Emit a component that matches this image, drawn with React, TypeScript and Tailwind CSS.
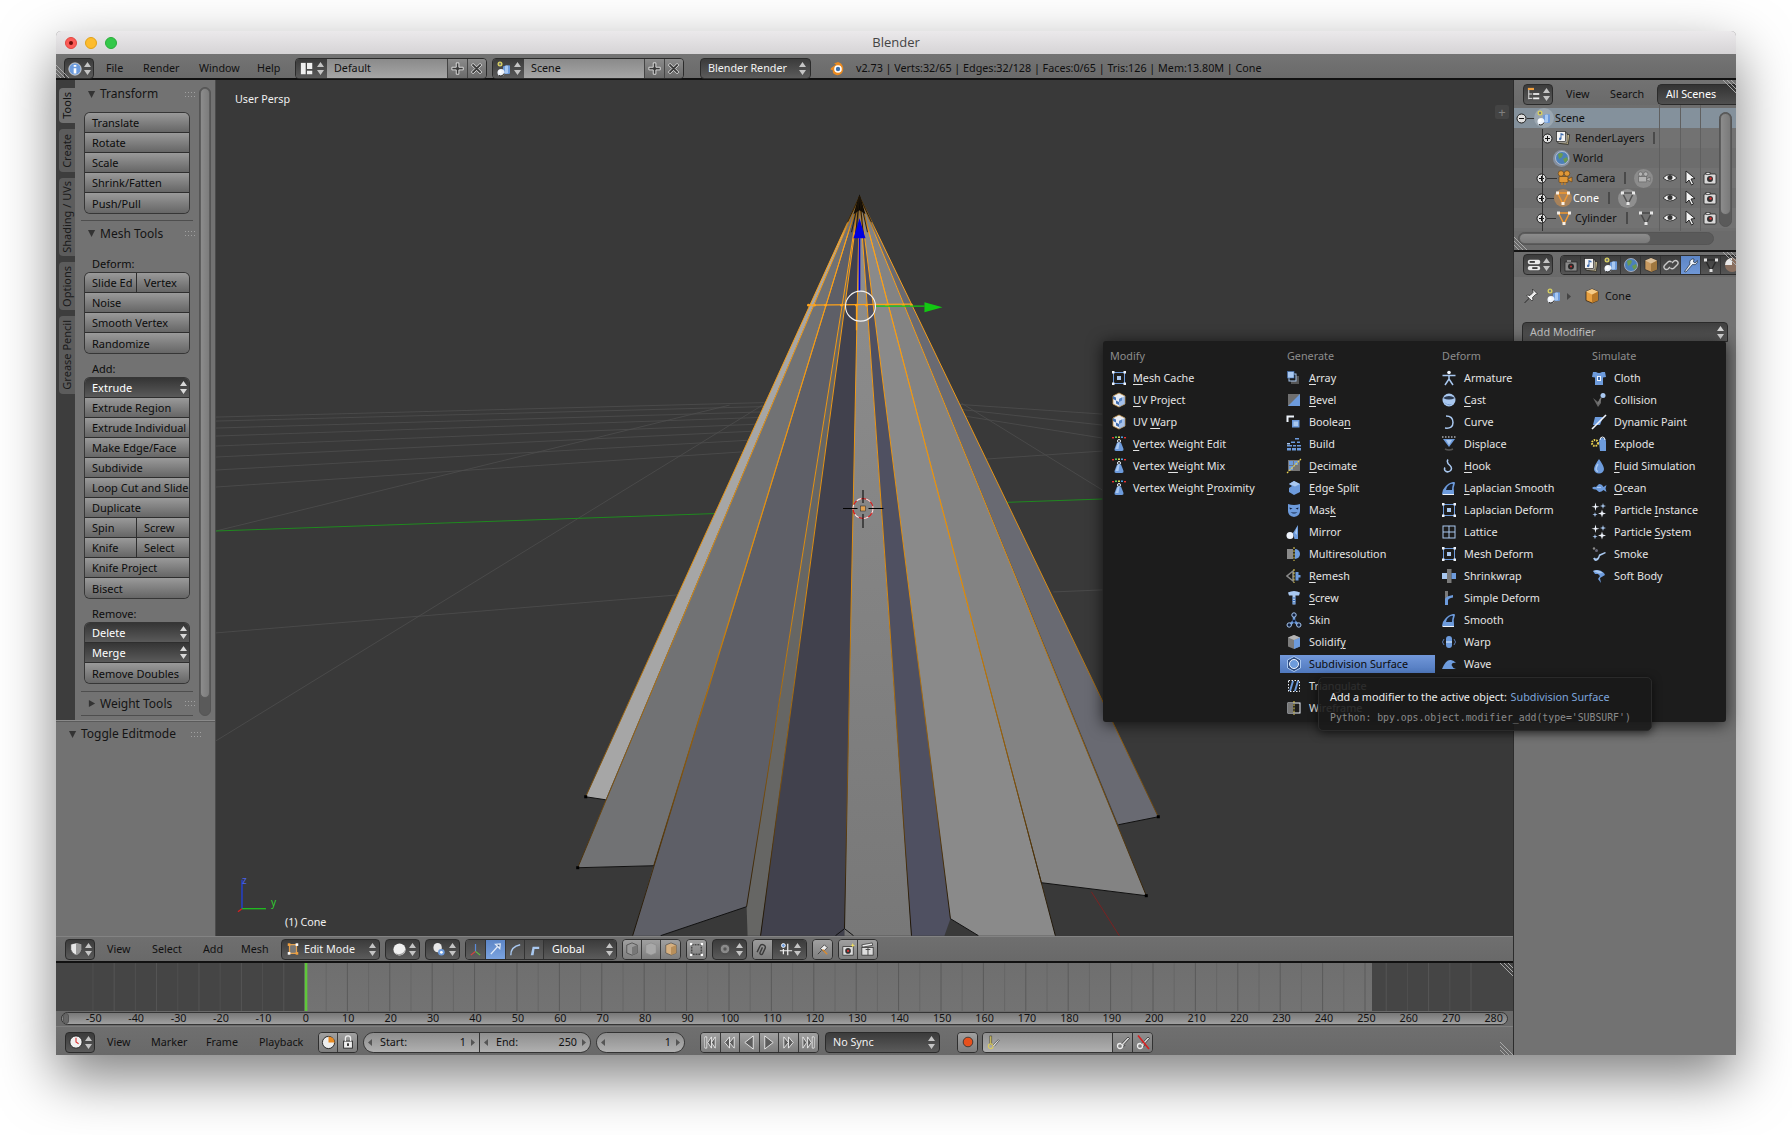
import React from 'react';

const FONT = "[font-family:'Noto_Sans','Open_Sans',sans-serif]";

// small icon wrapper, everything is drawn on a 16x16 grid
const S: React.FC<{ children: React.ReactNode; size?: number; className?: string }> = ({ children, size = 16, className }) => (
  <svg width={size} height={size} viewBox="0 0 16 16" className={`shrink-0 ${className ?? ''}`}>{children}</svg>
);

const L = '#a9c8f0';
const M = '#6d9bdc';
const D = '#3f6cae';
const W = '#eef3fb';
const G = '#8a8a8a';
const Y = '#e8d050';

const corners = (c: string) => (
  <>
    <rect x="1" y="1" width="2.5" height="2.5" fill={c} />
    <rect x="12.5" y="1" width="2.5" height="2.5" fill={c} />
    <rect x="1" y="12.5" width="2.5" height="2.5" fill={c} />
    <rect x="12.5" y="12.5" width="2.5" height="2.5" fill={c} />
  </>
);
const meshIcon = (
  <>
    <rect x="2.5" y="2.5" width="11" height="11" fill="none" stroke={M} />
    <rect x="6" y="6" width="4" height="4" fill={L} />
    {corners(W)}
  </>
);
const uvIcon = (
  <>
    <path d="M8 1 14 4v8l-6 3-6-3V4z" fill="#e9edf5" stroke="#c99a50" strokeWidth=".8" />
    <path d="M2 4l3 1.5v3L2 7zM5 8.5l3 1.5v3L5 11.5zM8 7l3-1.5v3L8 10z" fill={D} />
    <path d="M8 7l6-3v8l-6 3z" fill={M} opacity=".55" />
  </>
);
const weightIcon = (
  <>
    <rect x="1" y="1" width="2" height="1.4" fill="#e33" />
    <rect x="4" y="0.5" width="2" height="1.4" fill="#6d6" />
    <rect x="7" y="0.5" width="2" height="1.4" fill="#ee5" />
    <rect x="10" y="0.5" width="2" height="1.4" fill="#5ae" />
    <rect x="13" y="1" width="2" height="1.4" fill="#e33" />
    <circle cx="8" cy="5" r="1.5" fill="none" stroke={W} />
    <path d="M6 6.500h4l2.500 6.500q.3 2-1.500 2H5q-1.800 0-1.500-2z" fill={M} />
    <path d="M6.500 7h2l-1 6H4.500z" fill={L} />
  </>
);
const smoothIcon = (
  <>
    <path d="M1 14q0-4 3-7 3-4 8-5 2-.5 2 1-2 5-1 9v2z" fill={M} />
    <path d="M5 10q0-3 3-5 3-2 4-1-1 3-1 6z" fill="#162030" />
    <path d="M2 14h11v1H1z" fill={W} />
  </>
);
const particles = (
  <>
    <path d="M4.500 0.500 5.300 4l3.200.8-3.200.8-.8 3.400-.8-3.400L.500 4.800 3.700 4z" fill={W} />
    <path d="M12 1l.7 2.300 2.300.7-2.300.7-.7 2.300-.7-2.300L9 4l2.300-.7z" fill={L} />
    <path d="M11 7.500l.9 3.100 3.100.9-3.100.9-.9 3.100-.9-3.100L7 11.500l3.100-.9z" fill={W} />
    <path d="M4 10l.6 2 2 .6-2 .6-.6 2-.6-2-2-.6 2-.6z" fill={L} />
  </>
);

const MOD: Record<string, React.ReactNode> = {
  'Mesh Cache': meshIcon,
  'UV Project': uvIcon,
  'UV Warp': uvIcon,
  'Vertex Weight Edit': weightIcon,
  'Vertex Weight Mix': weightIcon,
  'Vertex Weight Proximity': weightIcon,
  Array: <><rect x="5" y="6" width="8" height="8" fill="#555" /><rect x="3" y="4" width="7" height="7" fill="#1c1c1c" stroke={L} /><rect x="1.500" y="1.500" width="6.500" height="6.500" fill={L} stroke={D} strokeWidth=".6" /></>,
  Bevel: <><rect x="2" y="2" width="12" height="12" fill="#6f6f6f" /><path d="M14 2v12H2z" fill={M} /></>,
  Boolean: <><path d="M1.500 8V2.500H8" fill="none" stroke={W} strokeWidth="2" /><rect x="6" y="6" width="7.500" height="7.500" fill={M} /><rect x="7.500" y="7.500" width="4.500" height="4.500" fill={L} /></>,
  Build: <><path d="M9 2h4v1.500H9zM5 5.500h4V7H5zM11 5.500h3V7h-3zM1 9h5v1.500H1zM7 9h3v1.500H7zM11 9h4v1.500h-4zM1 12h4v2.500H1zM6 12h4v2.500H6zM11 12h4v2.500h-4z" fill={M} /><path d="M1 7h3v1.500H1z" fill={L} /></>,
  Decimate: <><rect x="2" y="2" width="12" height="11" fill="#777" /><path d="M3 3h4v4H3zM8 3h4v4H8zM3 8h4v4H3z" fill={M} /><path d="M1 15 15 1" stroke={Y} strokeWidth="1.200" strokeDasharray="2 1" /></>,
  'Edge Split': <><path d="M8 1l6 3v8l-6 3-5-3V8l3-2-3-2z" fill={M} /><path d="M8 1l6 3-5 2.500L3 4z" fill={L} /></>,
  Mask: <><path d="M2 2q6 2 12 0v7q0 5-6 6-6-1-6-6z" fill={M} /><path d="M3.500 5.500l3 1-2.500 1zM12.500 5.500l-3 1 2.500 1z" fill="#102040" /><path d="M4.500 10q3.500 3 7 0-3.500 1-7 0z" fill="#102040" /></>,
  Mirror: <><circle cx="4" cy="11.500" r="3.500" fill={W} /><path d="M7 9 12 1v14H8.500z" fill={M} /><path d="M9 9l2-6v8z" fill={L} /></>,
  Multiresolution: <><rect x="1" y="3" width="6" height="10" fill={G} /><path d="M9 3a5 5 0 0 1 0 10z" fill={M} /><path d="M8 1v14" stroke={Y} strokeDasharray="2 1.200" /></>,
  Remesh: <><path d="M7 3 1 8l6 5z" fill="none" stroke={G} strokeWidth="1.500" /><path d="M9.500 4h3v3h2v2.500h-2v3h-3z" fill={M} /><path d="M8 1v14" stroke={Y} strokeDasharray="2 1.200" /></>,
  Screw: <><path d="M2 2.500q6-3 12 0l-1 3H9.500v9H6.500v-9H3z" fill={L} /><path d="M6 8h4M6 10.500h4M6 13h4" stroke={D} /></>,
  Skin: <><path d="M8 3v6M8 9l-4 3.500M8 9l4 3.500" stroke={M} strokeWidth="2.500" /><circle cx="8" cy="3" r="2.200" fill="#102040" stroke={L} /><circle cx="3.200" cy="13" r="2.200" fill="#102040" stroke={L} /><circle cx="12.800" cy="13" r="2.200" fill="#102040" stroke={L} /><circle cx="8" cy="9" r="1.500" fill="#102040" /></>,
  Solidify: <><path d="M8 1 14 3.500v9L8 15l-6-2.500v-9z" fill="#7c7c7c" /><path d="M8 6l6-2.500v9L8 15z" fill={M} /><path d="M2 3.500 8 1l6 2.500L8 6z" fill="#b5b5b5" /></>,
  'Subdivision Surface': <><path d="M8 .5 14.500 4v8L8 15.500 1.500 12V4z" fill="#2c4a80" stroke={L} /><circle cx="8" cy="8" r="4.500" fill={M} stroke={W} /></>,
  Triangulate: <><rect x="2.500" y="2.500" width="11" height="11" fill="none" stroke={W} strokeDasharray="1.500 1.500" /><path d="M3 13 6 3h2l-3 10zM8 13l3-10h2l-3 10z" fill={M} /></>,
  Wireframe: <><rect x="2" y="3" width="12" height="10" fill="none" stroke={W} /><rect x="2" y="3" width="5" height="10" fill="#777" /><path d="M8 1v14" stroke={Y} strokeDasharray="2 1.200" /></>,
  Armature: <><circle cx="8" cy="2.500" r="1.800" fill={W} /><path d="M1.500 5.500h13M8 5v4M8 9l-4 6M8 9l4 6" stroke={L} strokeWidth="1.500" fill="none" /></>,
  Cast: <><circle cx="8" cy="8" r="6.500" fill={L} /><path d="M2 6q6-4 12 0-6 3-12 0z" fill="#2c3a50" /><path d="M3 10q4 4 9 2-5 3-9-2z" fill={D} /></>,
  Curve: <><path d="M5 2q7 0 7 6.500T4 14" fill="none" stroke={L} strokeWidth="1.500" /></>,
  Displace: <><path d="M2 3h12L8 11z" fill={M} /><path d="M5 4h6L8 9z" fill={L} /><path d="M1 1h14" stroke={W} strokeDasharray="1.500 1.500" /><path d="M4 13q4 2 8 0" stroke="#555" strokeWidth="1.500" fill="none" /></>,
  Hook: <><path d="M7 1.500q-2 3 2 6 3 3 0 5.500-3 2-5-.5-1-1.500 0-3" fill="none" stroke={L} strokeWidth="1.500" /></>,
  'Laplacian Smooth': smoothIcon,
  'Laplacian Deform': meshIcon,
  Lattice: <><rect x="2" y="2" width="12" height="12" fill="none" stroke={L} /><path d="M8 2v12M2 8h12" stroke={L} /></>,
  'Mesh Deform': meshIcon,
  Shrinkwrap: <><rect x="6" y="1" width="4.500" height="14" fill="#7a7a7a" /><rect x="1" y="5" width="5" height="6" fill={L} /><rect x="10.500" y="5" width="4.500" height="6" fill={M} /></>,
  'Simple Deform': <><rect x="4" y="1" width="3" height="8" fill="#7a7a7a" /><path d="M4 15V9q1-3 8-4v2.500q-5 1-5 3V15z" fill={M} /></>,
  Smooth: smoothIcon,
  Warp: <><rect x="5" y="2" width="6" height="12" rx="3" fill={M} /><path d="M5 7h6v2H5z" fill={L} /><path d="M3 5q-3 3 0 6M13 5q3 3 0 6" stroke="#5a7ab0" fill="none" /></>,
  Wave: <><path d="M1 13q4-10 9-9 3 .5 5 3-4-1-4.500 2 1 3 4.500 4z" fill={M} /><path d="M5 8q3-3 6-3-4 1-6 3z" fill={L} /></>,
  Cloth: <><path d="M2 2h3q3 2 6 0h3l1 5-3 .5V15H4V7.500L1 7z" fill={M} /><rect x="6" y="6" width="4" height="5" fill={W} /><rect x="7" y="7" width="2" height="3" fill={D} /></>,
  Collision: <><path d="M2 6l5 4 3-5v6l-3 4z" fill="#666" /><path d="M10 6l-3 6" stroke="#777" strokeWidth="1.500" /><circle cx="12" cy="3.500" r="2.500" fill={L} /></>,
  'Dynamic Paint': <><path d="M4 3h8L9 11H2z" fill={M} /><path d="M1 15 15 1" stroke={W} strokeWidth="1.600" /></>,
  Explode: <><path d="M8 6a3.500 4 0 0 1 7 0v9H9z" fill={M} /><path d="M9 4a2.500 3 0 0 1 5 0" fill="none" stroke={W} /><circle cx="4" cy="7" r="3" fill="none" stroke={Y} strokeDasharray="1.500 1" strokeWidth="2" /></>,
  'Fluid Simulation': <><path d="M8 1q5 7 5 10a5 4.500 0 0 1-10 0q0-3 5-10z" fill={M} /><path d="M7 6q-2 3-2 5 0 2 2 2.500" stroke={L} strokeWidth="1.500" fill="none" /></>,
  Ocean: <><path d="M1 8q2-2 4-1l3-3q3 0 4.500 3l3-2-1 3.500 1 3.500-3-2Q10 12.500 8 12L5 9.500Q3 10 1 8z" fill={M} /><path d="M6 7.500h4" stroke={L} /></>,
  'Particle Instance': particles,
  'Particle System': particles,
  Smoke: <><path d="M2 12.500 4 15q4 0 5-5l6-3-1-1-6 2.500q-1 4-3 4-1 0-1-1z" fill={L} /><circle cx="3" cy="2.500" r="1.200" fill={G} /><circle cx="5.500" cy="4.500" r="1.500" fill="#667" /></>,
  'Soft Body': <><path d="M2 3q6-3 11 2l1 2-5 3 1 5-3-4 2-3-2-2-3 0z" fill={M} /><path d="M2 3q6-2 10 2l-4 .5z" fill={L} /></>,
};

const COLS: { title: string; w: string; items: [string, number?][] }[] = [
  { title: 'Modify', w: 'w-[177px]', items: [['Mesh Cache', 0], ['UV Project', 0], ['UV Warp', 3], ['Vertex Weight Edit', 0], ['Vertex Weight Mix', 7], ['Vertex Weight Proximity', 14]] },
  { title: 'Generate', w: 'w-[155px]', items: [['Array', 0], ['Bevel', 0], ['Boolean', 6], ['Build'], ['Decimate', 0], ['Edge Split', 0], ['Mask', 3], ['Mirror'], ['Multiresolution'], ['Remesh', 0], ['Screw', 0], ['Skin'], ['Solidify', 7], ['Subdivision Surface'], ['Triangulate'], ['Wireframe']] },
  { title: 'Deform', w: 'w-[150px]', items: [['Armature'], ['Cast', 0], ['Curve'], ['Displace'], ['Hook', 0], ['Laplacian Smooth', 0], ['Laplacian Deform'], ['Lattice'], ['Mesh Deform'], ['Shrinkwrap'], ['Simple Deform'], ['Smooth'], ['Warp'], ['Wave']] },
  { title: 'Simulate', w: 'flex-1', items: [['Cloth'], ['Collision'], ['Dynamic Paint'], ['Explode'], ['Fluid Simulation', 0], ['Ocean', 0], ['Particle Instance', 9], ['Particle System', 9], ['Smoke'], ['Soft Body']] },
];

const Accel: React.FC<{ label: string; at?: number }> = ({ label, at }) =>
  at === undefined ? <span>{label}</span> : (
    <span>{label.slice(0, at)}<span className="underline underline-offset-2">{label[at]}</span>{label.slice(at + 1)}</span>
  );

// up/down arrows of the blender dropdowns
const UpDown: React.FC<{ c?: string; className?: string }> = ({ c = '#c4c4c4', className }) => (
  <svg width="7" height="13" viewBox="0 0 7 13" className={`shrink-0 ${className ?? ''}`}><path d="M3.500 0 7 5H0zM0 8h7l-3.500 5z" fill={c} /></svg>
);

// the hatched corners of each blender area
const Hatch: React.FC<{ className: string; flip?: boolean }> = ({ className, flip }) => (
  <svg width="13" height="13" viewBox="0 0 13 13" className={`absolute ${className}`}>
    <path d={flip ? 'M0 0 13 13M4 0 13 9M8 0 13 5' : 'M0 0 13 13M0 4 9 13M0 8 5 13'} stroke="#a8a8a8" strokeWidth="1" />
  </svg>
);

const SceneIcon = (
  <S>
    <circle cx="4" cy="3" r="2.500" fill="#d8d060" />
    <circle cx="4" cy="3" r="1.200" fill="#777" />
    <path d="M7 5.500q4-2 7-1v8q-3 1-7 0z" fill={M} />
    <path d="M9 5q2-1 3 0v7q-1 .800-3 .300z" fill={L} />
    <circle cx="5" cy="11.500" r="3.500" fill={W} />
    <circle cx="4" cy="10.500" r="1.500" fill="#fff" />
    <path d="M3 14.500a3.500 3.500 0 0 0 5-2" stroke="#222" fill="none" />
  </S>
);
const PlusIcon = <S size={14}><path d="M6 1h3v5h5v3H9v5H6V9H1V6h5z" fill="#3a3a3a" stroke="#e8e8e8" strokeWidth="1" /></S>;
const XIcon = <S size={14}><path d="M2 4l2-2 4 4 4-4 2 2-4 4 4 4-2 2-4-4-4 4-2-2 4-4z" fill="#3a3a3a" stroke="#e8e8e8" strokeWidth="1" transform="translate(-.5 -.5)" /></S>;
const ConeTri = (c: string, fill = 'none') => (
  <S>
    <path d="M2.500 3h11L8 14z" fill={fill} stroke={c} strokeWidth="1.500" />
    <rect x="1" y="1.500" width="3" height="3" fill="#fff" opacity=".85" />
    <rect x="12" y="1.500" width="3" height="3" fill="#fff" opacity=".85" />
    <rect x="6.500" y="12" width="3" height="3" fill="#fff" opacity=".85" />
  </S>
);
const CamOrange = (
  <S>
    <circle cx="4" cy="3.500" r="2.800" fill="#e09838" stroke="#5a3a10" strokeWidth=".6" />
    <circle cx="10" cy="3.500" r="2.800" fill="#e09838" stroke="#5a3a10" strokeWidth=".6" />
    <rect x="2" y="6.500" width="9" height="6" rx="1" fill="#e09838" stroke="#5a3a10" strokeWidth=".6" />
    <path d="M11 9l4-2v5l-4-2z" fill="#e09838" stroke="#5a3a10" strokeWidth=".6" />
    <path d="M5 12.500v2.500M8 12.500v2.500" stroke="#c08030" strokeWidth="1.500" />
  </S>
);
const RenderCam = (
  <S>
    <rect x="2" y="4" width="12" height="10" rx="1" fill="#d8d8d8" stroke="#222" strokeWidth=".8" />
    <rect x="4" y="2.500" width="4" height="2" fill="#ddd" stroke="#222" strokeWidth=".6" />
    <circle cx="8" cy="9" r="3" fill="#333" />
    <circle cx="8.500" cy="8.500" r="1.200" fill="#d33" />
  </S>
);
const Eye = (
  <S>
    <path d="M1 8q7-7 14 0-7 6-14 0z" fill="#f0f0f0" stroke="#222" strokeWidth=".8" />
    <circle cx="8" cy="7.500" r="2.500" fill="#333" />
  </S>
);
const Arrow = (
  <S><path d="M4 1v12l3-3 2.500 5 2-1-2.500-5 4-.5z" fill="#f4f4f4" stroke="#1c1c1c" strokeWidth=".9" /></S>
);
const Globe = (
  <S>
    <circle cx="8" cy="8" r="6.500" fill="#4c80b8" stroke="#dde" strokeWidth=".6" />
    <path d="M4 4q3-2 5 0l-1 3-3 2zM9 9l4-2 1 3-3 3z" fill="#6a9a50" />
  </S>
);
const Cube = (
  <S>
    <path d="M8 1 14 3.500v9L8 15l-6-2.500v-9z" fill="#e8a040" stroke="#2a1a08" strokeWidth=".7" />
    <path d="M8 6.500 14 3.500v9L8 15z" fill="#b87828" />
    <path d="M2 3.500 8 1l6 2.500-6 3z" fill="#f4cb88" />
  </S>
);
const Layers = (
  <S>
    <rect x="5" y="4" width="9" height="10" fill="#c6b98e" stroke="#222" strokeWidth=".7" transform="rotate(8 9 9)" />
    <rect x="3" y="3" width="9" height="10" fill="#e0dccc" stroke="#222" strokeWidth=".7" />
    <rect x="1.500" y="1.500" width="9" height="10" fill="#f4f4f4" stroke="#222" strokeWidth=".7" />
    <path d="M4 9q0-2 1.500-1.500V3l3 1v1.500l-2-.5v4q-1 2-2.500.5z" fill={D} />
  </S>
);
const KeyIcon = (c: string, x?: boolean) => (
  <S>
    <circle cx="5" cy="12" r="2.500" fill="none" stroke={c} strokeWidth="1.300" />
    <path d="M6.500 10 13 3l1.500 1.500L9 10.500l1 1-1.500.5" fill="#d8d8d8" stroke="#222" strokeWidth=".7" />
    {x && <path d="M3 1.500 14 15" stroke="#d52020" strokeWidth="1.600" />}
  </S>
);

// gray widget with rounded outline, holds icons in joined cells
const Cells: React.FC<{ items: React.ReactNode[]; className?: string; active?: number; cell?: string; bg?: string }> = ({ items, className, active, cell = 'w-[19px]', bg = 'from-[#a0a0a0] to-[#7e7e7e]' }) => (
  <div className={`flex h-[21px] rounded-[4px] border border-[#2f2f2f] overflow-hidden shrink-0 ${className ?? ''}`}>
    {items.map((it, i) => (
      <div key={i} className={`${cell} h-full flex items-center justify-center border-r last:border-r-0 border-[#3a3a3a] bg-gradient-to-b ${i === active ? 'from-[#5d86c6] to-[#7ba3e0]' : bg}`}>{it}</div>
    ))}
  </div>
);

const Dark: React.FC<{ className?: string; children: React.ReactNode }> = ({ className, children }) => (
  <div className={`h-[21px] flex items-center rounded-[4px] border border-[#2b2b2b] bg-gradient-to-b from-[#3b3b3b] to-[#5b5b5b] text-[#f2f2f2] shrink-0 ${className ?? ''}`}>{children}</div>
);

const MenuText: React.FC<{ w: string; children: React.ReactNode }> = ({ w, children }) => (
  <div className={`${w} shrink-0 text-[#111]`}>{children}</div>
);

type Row = (string | { label: string; dark?: boolean })[];
const Group: React.FC<{ rows: Row[] }> = ({ rows }) => (
  <div className="w-[104px] ml-[10px] rounded-[5px] shadow-[0_0_0_1px_#363636] overflow-hidden">
    {rows.map((row, i) => (
      <div key={i} className="flex h-[20px] border-b last:border-b-0 border-[#2e2e2e]">
        {row.map((c, j) => {
          const o = typeof c === 'string' ? { label: c } : c;
          return (
            <div key={j} className={`${row.length > 1 ? (j === 0 ? 'w-[52px] border-r border-[#2e2e2e]' : 'flex-1') : 'flex-1'} flex items-center justify-between pl-[7px] pr-[2px] pt-[2px] bg-gradient-to-b whitespace-nowrap overflow-hidden ${o.dark ? 'from-[#353535] to-[#5a5a5a] text-white' : 'from-[#9a9a9a] to-[#666666] text-[#0c0c0c]'}`}>
              {o.label}
              {o.dark && <UpDown c="#d8d8d8" className="-mt-[2px]" />}
            </div>
          );
        })}
      </div>
    ))}
  </div>
);

const Dots = () => (
  <svg width="11" height="5" viewBox="0 0 11 5" className="shrink-0"><path d="M0 0h11M0 4h11" stroke="#a0a0a0" strokeDasharray="1 2" transform="translate(0 .5)" /></svg>
);

const PanelHead: React.FC<{ title: string; closed?: boolean; className: string }> = ({ title, closed, className }) => (
  <div className={`flex items-center text-[12px] text-[#141414] ${className}`}>
    <svg width="8" height="9" viewBox="0 0 9 10" className="shrink-0 mr-[4px]"><path d={closed ? 'M1 1l7 4-7 4z' : 'M0 1h8L4 9z'} fill="#333" /></svg>
    <span className="flex-1 whitespace-nowrap">{title}</span>
    <Dots />
  </div>
);

const TABS: [string, string, boolean][] = [
  ['Tools', 'h-[35px]', true],
  ['Create', 'h-[43px]', false],
  ['Shading / UVs', 'h-[78px]', false],
  ['Options', 'h-[48px]', false],
  ['Grease Pencil', 'h-[78px]', false],
];

const ToolShelf = () => (
  <div className="w-[160px] shrink-0 flex flex-col border-r border-[#4c4c4c] text-[11px]">
    <div className="flex h-[640px] shrink-0 bg-[#727272]">
      <div className="w-[19px] bg-[#3d3d3d] pl-[3px] pt-[8px] flex flex-col gap-[6px]">
        {TABS.map(([t, h, on]) => (
          <div key={t} className={`${h} rounded-l-[4px] flex items-center justify-center ${on ? 'bg-[#727272] text-[#111]' : 'bg-[#5c5c5c] text-[#1a1a1a]'}`}>
            <span className="[writing-mode:vertical-rl] rotate-180 whitespace-nowrap text-[11px]">{t}</span>
          </div>
        ))}
      </div>
      <div className="w-[124px] text-[#0d0d0d] shrink-0">
        <PanelHead title="Transform" className="h-[26px] pt-[2px] mb-[7px] pl-[13px] pr-[3px]" />
        <Group rows={[['Translate'], ['Rotate'], ['Scale'], ['Shrink/Fatten'], ['Push/Pull']]} />
        <div className="h-px bg-[#4e4e4e] ml-[6px] w-[112px] mt-[7px]" />
        <PanelHead title="Mesh Tools" className="h-[25px] pl-[13px] pr-[3px]" />
        <div className="h-[18px] mt-[9px] pl-[17px] flex items-center">Deform:</div>
        <Group rows={[['Slide Ed', 'Vertex'], ['Noise'], ['Smooth Vertex'], ['Randomize']]} />
        <div className="h-[18px] mt-[7px] pl-[17px] flex items-center">Add:</div>
        <Group rows={[[{ label: 'Extrude', dark: true }], ['Extrude Region'], ['Extrude Individual'], ['Make Edge/Face'], ['Subdivide'], ['Loop Cut and Slide'], ['Duplicate'], ['Spin', 'Screw'], ['Knife', 'Select'], ['Knife Project'], ['Bisect']]} />
        <div className="h-[18px] mt-[7px] pl-[17px] flex items-center">Remove:</div>
        <Group rows={[[{ label: 'Delete', dark: true }], [{ label: 'Merge', dark: true }], ['Remove Doubles']]} />
        <div className="h-px bg-[#4e4e4e] ml-[6px] w-[112px] mt-[8px]" />
        <PanelHead title="Weight Tools" closed className="h-[23px] pl-[13px] pr-[3px]" />
        <div className="h-px bg-[#4e4e4e] ml-[6px] w-[112px]" />
      </div>
      <div className="w-[12px] mt-[7px] h-[629px] rounded-full bg-[#5a5a5a] border border-[#555] overflow-hidden">
        <div className="h-[610px] rounded-full bg-gradient-to-r from-[#8c8c8c] to-[#7c7c7c] border border-[#5e5e5e]" />
      </div>
    </div>
    <div className="flex-1 bg-[#727272] border-t border-[#8a8a8a] shadow-[inset_0_1px_0_#5a5a5a] pl-[13px] pr-[13px] pt-[1px]">
      <PanelHead title="Toggle Editmode" className="h-[24px]" />
    </div>
  </div>
);

// the cone and its grid, a drawing in viewport pixels
const EDGE_POINTS: [number, number][] = [[586, 797], [578, 868], [654, 866], [633, 936], [747, 907], [761, 936], [845, 929], [912, 936], [951, 919], [1042, 883], [1147, 896], [1159, 817], [1056, 936]];
const GRID: [number, number, number, number][] = [
  [216, 417, 860, 400], [216, 421, 860, 404], [216, 428, 860, 409], [216, 436, 860, 414], [216, 446, 860, 420], [216, 457, 860, 426], [216, 470, 860, 434], [216, 487, 860, 444],
  [216, 633, 860, 580], [216, 741, 763, 405], [216, 531, 730, 405], [940, 403, 1103, 414], [940, 407, 1103, 425], [940, 412, 1103, 438], [962, 403, 1103, 490], [958, 461, 1103, 451], [1054, 592, 1103, 590],
];
const Viewport3D = () => (
  <svg className="absolute inset-0 w-full h-full" viewBox="216 80 1298 856">
    <defs>
      <linearGradient id="edge" gradientUnits="userSpaceOnUse" x1="0" y1="200" x2="0" y2="930">
        <stop offset="0" stopColor="#6a4810" />
        <stop offset=".05" stopColor="#ffa31a" />
        <stop offset=".55" stopColor="#d88a10" />
        <stop offset=".8" stopColor="#7a5010" />
        <stop offset="1" stopColor="#1c1408" />
      </linearGradient>
      <linearGradient id="centre" gradientUnits="userSpaceOnUse" x1="0" y1="200" x2="0" y2="936">
        <stop offset="0" stopColor="#8f8f8f" />
        <stop offset="1" stopColor="#787878" />
      </linearGradient>
    </defs>
    {GRID.map(([a, b, c, d], i) => <line key={i} x1={a} y1={b} x2={c} y2={d} stroke="#4e4e4e" strokeWidth=".8" />)}
    <line x1="216" y1="531" x2="760" y2="512" stroke="#1f8a1f" />
    <line x1="960" y1="504" x2="1103" y2="499" stroke="#1f8a1f" />
    <line x1="1092" y1="892" x2="1120" y2="936" stroke="#7a2222" />
    <polygon points="860,196 1159,817 1119,825" fill="#696a72" />
    <polygon points="860,196 586,797 606,800" fill="#a6a6a6" />
    <polygon points="860,196 606,800 654,866 578,868" fill="#717274" />
    <polygon points="860,196 578,868 654,866" fill="#717274" />
    <polygon points="860,196 654,866 633,936 661,936 747,907" fill="#5e5f67" />
    <polygon points="860,196 747,907 748,936 761,936" fill="#666664" />
    <polygon points="860,196 761,936 845,936 845,929" fill="#41414d" />
    <polygon points="860,196 845,929 845,936 912,936" fill="url(#centre)" />
    <polygon points="860,196 912,936 945,936 951,919" fill="#4f5061" />
    <polygon points="860,196 951,919 979,936 1056,936" fill="#8a8a8a" />
    <polygon points="860,196 1056,936 1042,883 1147,896" fill="#838383" />
    {EDGE_POINTS.map(([x, y], i) => <line key={i} x1="860" y1="196" x2={x} y2={y} stroke="url(#edge)" strokeWidth="1" />)}
    <path d="M586 797 606 800M578 868 654 866M661 936 747 907M951 919 979 936M1042 883 1147 896M1159 817 1119 825M845 929 836 936M845 929 854 936" stroke="#111" fill="none" />
    {[[586, 797], [578, 868], [1147, 896], [1159, 817]].map(([x, y], i) => <rect key={i} x={x - 1.500} y={y - 1.500} width="3" height="3" fill="#000" />)}
    <path d="M860 194 854 214 860 210 866 214z" fill="#0c0804" />
    <path d="M860 196 848 222M860 196 872 222M860 196 852 232M860 196 868 232M860 196 856 236M860 196 864 236" stroke="#1e1508" strokeWidth=".9" />
    <path d="M808 305 912 304M857 304 857 330" stroke="#ffa31a" strokeWidth="1.300" fill="none" />
    {[809, 815, 826, 842, 857, 867, 887, 904, 912].map(x => <circle key={x} cx={x} cy="305" r="1.400" fill="#ffa31a" />)}
    <line x1="860" y1="238" x2="860" y2="291" stroke="#0000e0" strokeWidth="1.600" />
    <path d="M860 218 866 238H854z" fill="#0000e0" />
    <line x1="876" y1="306" x2="925" y2="306" stroke="#12c812" strokeWidth="1.400" />
    <path d="M943 307 925 302V312z" fill="#12c812" />
    <circle cx="861" cy="306" r="15" fill="none" stroke="#f2f2f2" strokeWidth="1.100" />
    <circle cx="863.500" cy="508.500" r="10" fill="none" stroke="#e01818" strokeWidth="1.100" />
    <circle cx="863.500" cy="508.500" r="10" fill="none" stroke="#f0f0f0" strokeWidth="1.100" strokeDasharray="5 5" />
    <path d="M843.500 508.500H858M869 508.500H884M863.500 490V503M863.500 514V528" stroke="#000" />
    <rect x="861" y="506" width="5" height="5" fill="#e0a050" stroke="#222" strokeWidth=".5" />
    <path d="M242 909V880" stroke="#2040e0" strokeWidth="1.300" />
    <path d="M242 909H266" stroke="#20c020" strokeWidth="1.300" />
    <path d="M242 909l-4 3" stroke="#d82020" strokeWidth="1.300" />
  </svg>
);

const MenuBar = () => (
  <div className="relative h-[26px] shrink-0 flex items-center pt-[5px] bg-gradient-to-b from-[#747474] to-[#6a6a6a] border-b-2 border-[#111] text-[10.750px]">
    <Hatch className="left-0 bottom-0" />
    <Dark className="ml-[8px] w-[30px] justify-center gap-[2px]">
      <S size={14}><circle cx="8" cy="8" r="7" fill={M} stroke="#ddd" /><path d="M6.500 3.500h3v2h-3zM6.500 7h3v6h-3z" fill="#fff" /></S>
      <UpDown />
    </Dark>
    <div className="w-[12px] shrink-0" />
    <MenuText w="w-[37px]">File</MenuText>
    <MenuText w="w-[56px]">Render</MenuText>
    <MenuText w="w-[58px]">Window</MenuText>
    <MenuText w="w-[38px]">Help</MenuText>
    <div className="flex h-[21px] rounded-[4px] border border-[#2b2b2b] overflow-hidden shrink-0 w-[192px]">
      <div className="w-[31px] bg-gradient-to-b from-[#3b3b3b] to-[#5b5b5b] flex items-center justify-center gap-[3px]">
        <S size={14}><rect x="1" y="1" width="5.500" height="13" fill="#f0f0f0" /><rect x="8" y="1" width="6" height="7" fill="#f0f0f0" /><rect x="8" y="10" width="6" height="4" fill="#f0f0f0" /></S>
        <UpDown />
      </div>
      <div className="w-[120px] bg-gradient-to-b from-[#8a8a8a] to-[#a6a6a6] pl-[7px] flex items-center text-[#111]">Default</div>
      <div className="w-[20px] border-l border-[#444] bg-gradient-to-b from-[#8a8a8a] to-[#6a6a6a] flex items-center justify-center">{PlusIcon}</div>
      <div className="flex-1 border-l border-[#444] bg-gradient-to-b from-[#8a8a8a] to-[#6a6a6a] flex items-center justify-center">{XIcon}</div>
    </div>
    <div className="flex h-[21px] ml-[5px] rounded-[4px] border border-[#2b2b2b] overflow-hidden shrink-0 w-[192px]">
      <div className="w-[31px] bg-gradient-to-b from-[#3b3b3b] to-[#5b5b5b] flex items-center justify-center gap-[2px]">{SceneIcon}<UpDown /></div>
      <div className="w-[120px] bg-gradient-to-b from-[#8a8a8a] to-[#a6a6a6] pl-[7px] flex items-center text-[#111]">Scene</div>
      <div className="w-[20px] border-l border-[#444] bg-gradient-to-b from-[#8a8a8a] to-[#6a6a6a] flex items-center justify-center">{PlusIcon}</div>
      <div className="flex-1 border-l border-[#444] bg-gradient-to-b from-[#8a8a8a] to-[#6a6a6a] flex items-center justify-center">{XIcon}</div>
    </div>
    <Dark className="ml-[16px] w-[111px] pl-[7px] pr-[4px] justify-between">Blender Render<UpDown /></Dark>
    <div className="ml-[18px] mr-[11px]">
      <S size={16}><path d="M2 7l5-3.500L5 2.500 9 1q4 1 5 5 1 4-2 7-3 2-6 .5Q3 12 4 9.500L1.500 8.500z" fill="#ea8a20" /><circle cx="9" cy="8" r="3.800" fill="#fff" /><circle cx="9" cy="8" r="2.200" fill="#3d6ea8" /></S>
    </div>
    <div className="text-[#0e0e0e] whitespace-nowrap">v2.73 | Verts:32/65 | Edges:32/128 | Faces:0/65 | Tris:126 | Mem:13.80M | Cone</div>
  </div>
);

const ViewHeader = () => (
  <div className="h-[27px] shrink-0 flex items-center bg-gradient-to-b from-[#6f6f6f] to-[#696969] border-t border-[#838383] border-b-2 border-b-[#111] text-[10.750px]">
    <Dark className="ml-[9px] w-[30px] justify-center gap-[2px]">
      <S size={14}><path d="M2 2.500 8 1l6 1.500v6Q13 13 8 15 3 13 2 8.500z" fill="#e8e8e8" stroke="#333" strokeWidth=".7" /><path d="M8 1l6 1.500v6Q13 13 8 15z" fill="#9a9a9a" /></S>
      <UpDown />
    </Dark>
    <div className="w-[12px] shrink-0" />
    <MenuText w="w-[45px]">View</MenuText>
    <MenuText w="w-[51px]">Select</MenuText>
    <MenuText w="w-[38px]">Add</MenuText>
    <MenuText w="w-[40px]">Mesh</MenuText>
    <Dark className="w-[99px] pl-[4px] pr-[3px] gap-[4px]">
      <S size={14}><path d="M4 3h8v10H4z" fill="#777" stroke="#e0a050" strokeWidth="1.400" /><rect x="2" y="1.500" width="3" height="3" fill="#f0a040" /><rect x="11" y="1.500" width="3" height="3" fill="#fff" /><rect x="2" y="11.500" width="3" height="3" fill="#fff" /><rect x="11" y="11.500" width="3" height="3" fill="#f0a040" /></S>
      <span className="flex-1">Edit Mode</span><UpDown />
    </Dark>
    <Dark className="ml-[5px] w-[35px] pl-[6px] pr-[3px] justify-between">
      <S size={15}><circle cx="8" cy="8" r="6.500" fill="#f0f0f0" /><path d="M14 8A6 6 0 0 1 3 11.500 7 7 0 0 0 14 8z" fill="#999" /></S><UpDown />
    </Dark>
    <Dark className="ml-[5px] w-[35px] pl-[6px] pr-[3px] justify-between">
      <S size={15}><ellipse cx="6" cy="6" rx="4.500" ry="5" fill="#e8e8e8" /><circle cx="10" cy="11" r="3.500" fill={M} /><circle cx="10" cy="11" r="1.500" fill="#fff" /></S><UpDown />
    </Dark>
    <div className="flex h-[21px] ml-[5px] rounded-[4px] border border-[#2b2b2b] overflow-hidden shrink-0 w-[152px]">
      <div className="w-[20px] border-r border-[#333] bg-gradient-to-b from-[#4a4a4a] to-[#5e5e5e] flex items-center justify-center">
        <S size={15}><path d="M8 2v8" stroke="#5a8ad8" strokeWidth="1.300" /><path d="M8 10l-5 4" stroke="#e04040" strokeWidth="1.300" /><path d="M8 10l5 4" stroke="#60c040" strokeWidth="1.300" /></S>
      </div>
      <div className="w-[20px] border-r border-[#333] bg-gradient-to-b from-[#5d86c6] to-[#7ba3e0] flex items-center justify-center">
        <S size={15}><path d="M3 13 11 4M8 2.500l5-.5-.5 5z" stroke="#e0eaf8" strokeWidth="1.400" fill="#27487c" /></S>
      </div>
      <div className="w-[19px] border-r border-[#333] bg-gradient-to-b from-[#4a4a4a] to-[#5e5e5e] flex items-center justify-center">
        <S size={15}><path d="M3 14q0-9 10-11" stroke="#a9c8f0" strokeWidth="1.500" fill="none" /></S>
      </div>
      <div className="w-[19px] border-r border-[#333] bg-gradient-to-b from-[#4a4a4a] to-[#5e5e5e] flex items-center justify-center">
        <S size={15}><path d="M4 14 6 5h7v2.500H8L7 14z" fill="#a9c8f0" /></S>
      </div>
      <div className="flex-1 pl-[8px] pr-[3px] bg-gradient-to-b from-[#3b3b3b] to-[#5b5b5b] text-white flex items-center justify-between">Global<UpDown /></div>
    </div>
    <Cells className="ml-[5px]" items={[
      <S size={14} key="a"><path d="M8 1 14 3.500v9L8 15l-6-2.500v-9z" fill="#9a9a9a" stroke="#333" strokeWidth=".7" /><path d="M8 6v9l6-2.500v-9z" fill="#777" /></S>,
      <S size={14} key="b"><path d="M8 1 14 3.500v9L8 15l-6-2.500v-9z" fill="#a8a8a8" stroke="#888" strokeWidth=".7" /></S>,
      <S size={14} key="c"><path d="M8 1 14 3.500v9L8 15l-6-2.500v-9z" fill="#d6b080" stroke="#444" strokeWidth=".7" /><path d="M8 6v9l6-2.500v-9z" fill="#b88f5a" /></S>,
    ]} />
    <Cells className="ml-[5px]" items={[<S size={15} key="a"><rect x="3" y="3" width="10" height="10" fill="none" stroke="#222" strokeDasharray="2 1" />{corners('#fff')}</S>]} />
    <Dark className="ml-[5px] w-[35px] pl-[5px] pr-[3px] justify-between">
      <S size={14}><circle cx="8" cy="8" r="5.500" fill="#8a8a8a" stroke="#444" /><circle cx="8" cy="8" r="2" fill="#555" /></S><UpDown />
    </Dark>
    <div className="flex h-[21px] ml-[5px] rounded-[4px] border border-[#2b2b2b] overflow-hidden shrink-0 w-[55px]">
      <div className="w-[20px] border-r border-[#333] bg-gradient-to-b from-[#9c9c9c] to-[#7c7c7c] flex items-center justify-center"><S size={15}><path d="M4 13V6a3 3 0 0 1 6 0v6a1.500 1.500 0 0 1-3 0V6" stroke="#3a3a3a" strokeWidth="1.500" fill="none" transform="rotate(25 8 8)" /></S></div>
      <div className="flex-1 bg-gradient-to-b from-[#3b3b3b] to-[#5b5b5b] flex items-center justify-center gap-[1px]"><S size={14}><circle cx="5" cy="4" r="2.200" fill={M} stroke="#fff" /><path d="M1 10h14M10 2v13M5 8v6" stroke="#f0f0f0" strokeWidth="1.400" /></S><UpDown /></div>
    </div>
    <Cells className="ml-[5px]" items={[<S size={15} key="a"><path d="M3 13l4-4M6 7l4-4 3 3-4 4z" stroke="#2a2a2a" fill="#f0f0f0" strokeWidth=".8" /><path d="M8 8l5 5" stroke="#d88a30" strokeWidth="1.500" /></S>]} />
    <Cells className="ml-[5px]" items={[
      <S size={15} key="a"><rect x="2" y="5" width="11" height="9" fill="#ddd" stroke="#222" strokeWidth=".7" /><circle cx="7.500" cy="9.500" r="3" fill="#333" /><circle cx="7.500" cy="9.500" r="1.200" fill="#d33" /><path d="M12.500 1l.7 1.800 1.800.7-1.800.7-.7 1.800-.7-1.800L10 3.500l1.800-.7z" fill="#f0e060" /></S>,
      <S size={15} key="b"><path d="M2 3 13 1l.5 2.500-11 2z" fill="#eee" stroke="#222" strokeWidth=".7" /><rect x="2" y="6" width="12" height="8" fill="#ddd" stroke="#222" strokeWidth=".7" /><path d="M6 8h5M8.500 6v8" stroke="#444" /></S>,
    ]} />
  </div>
);

const Timeline = () => {
  const lines = Array.from({ length: 66 }, (_, i) => i);
  return (
    <div className="relative h-[48px] shrink-0 flex bg-[#6e6e6e]">
      <div className="w-[248px] bg-[#454545]" />
      <div className="w-[1068px] bg-gradient-to-b from-[#6f6f6f] to-[#737373]" />
      <div className="flex-1 bg-[#454545]" />
      <svg className="absolute inset-0 w-full h-full" viewBox="56 963 1458 48">
        {lines.map(i => {
          const x = 93 + i * 21.215;
          return <line key={i} x1={x} y1="963" x2={x} y2="1011" stroke={i % 2 === 0 ? '#5a5a5a' : '#666'} opacity={x < 304 || x > 1372 ? 0.5 : 1} />;
        })}
        <rect x="305" y="963" width="2.500" height="48" fill="#5fc83a" />
      </svg>
      <Hatch className="right-0 top-0" flip />
    </div>
  );
};

const SCALE = Array.from({ length: 34 }, (_, i) => -50 + i * 10);
const ScaleBar = () => (
  <div className="h-[15px] shrink-0 bg-[#6a6a6a] px-[5px] pt-[1px]">
    <div className="relative h-[13px] rounded-full border border-[#353535] bg-gradient-to-b from-[#787878] to-[#a0a0a0] overflow-hidden pl-[10.500px] flex items-center">
      <div className="absolute left-[1px] top-0 w-[6px] h-full rounded-full bg-[#666] border border-[#555]" />
      {SCALE.map(n => <div key={n} className="w-[42.430px] shrink-0 text-center text-[10.750px] leading-none text-[#111]">{n}</div>)}
    </div>
  </div>
);

const NumField: React.FC<{ label?: string; v: string; w: string; round?: string; border?: boolean }> = ({ label, v, w, round = '', border }) => (
  <div className={`${w} h-full flex items-center px-[4px] gap-[5px] text-[#111] bg-gradient-to-b from-[#8e8e8e] to-[#b0b0b0] ${round} ${border ? 'border-r border-[#333]' : ''}`}>
    <svg width="4" height="7" viewBox="0 0 4 7"><path d="M4 0v7L0 3.500z" fill="#555" /></svg>
    {label && <span className="ml-[3px]">{label}</span>}
    <span className="ml-auto">{v}</span>
    <svg width="4" height="7" viewBox="0 0 4 7"><path d="M0 0v7l4-3.500z" fill="#555" /></svg>
  </div>
);

const Transport = (d: string, k: string) => <S size={15} key={k}><path d={d} fill="#5c5c5c" stroke="#f2f2f2" strokeWidth=".9" /></S>;

const Footer = () => (
  <div className="relative flex-1 flex items-center pt-[2px] bg-gradient-to-b from-[#6f6f6f] to-[#696969] border-t border-[#7e7e7e] text-[10.750px]">
    <Dark className="ml-[9px] w-[30px] justify-center gap-[2px]">
      <S size={14}><circle cx="8" cy="8" r="7" fill="#f0f0f0" stroke="#222" /><path d="M8 3v5l3 2" stroke="#d33" fill="none" strokeWidth="1.300" /></S><UpDown />
    </Dark>
    <div className="w-[12px] shrink-0" />
    <MenuText w="w-[44px]">View</MenuText>
    <MenuText w="w-[55px]">Marker</MenuText>
    <MenuText w="w-[53px]">Frame</MenuText>
    <MenuText w="w-[59px]">Playback</MenuText>
    <Cells items={[
      <S size={15} key="a"><circle cx="8" cy="8" r="6.500" fill="#eee" stroke="#222" /><path d="M8 8V1.500A6.500 6.500 0 0 1 14.500 8z" fill="#e88a20" /></S>,
      <S size={14} key="b"><rect x="3" y="7" width="10" height="8" fill="#eee" stroke="#222" /><path d="M5 7V4a3 3 0 0 1 6 0v3" fill="none" stroke="#eee" strokeWidth="1.400" /><rect x="7" y="9.500" width="2" height="3" fill="#222" /></S>,
    ]} />
    <div className="ml-[5px] flex h-[21px] w-[228px] rounded-full border border-[#333] overflow-hidden shrink-0">
      <NumField label="Start:" v="1" w="w-[116px]" border />
      <NumField label="End:" v="250" w="flex-1" />
    </div>
    <div className="ml-[5px] flex h-[21px] w-[89px] rounded-full border border-[#333] overflow-hidden shrink-0">
      <NumField v="1" w="w-full" />
    </div>
    <Cells className="ml-[15px]" cell="w-[19.500px]" items={[
      Transport('M2 2h2v12H2zM13 2v12L9 8zM9 2v12L5 8z', 'a'),
      Transport('M13 2v12L8 8zM8 2v12L3 8z', 'b'),
      Transport('M12 1v14L3 8z', 'c'),
      Transport('M4 1v14l9-7z', 'd'),
      Transport('M3 2v12l5-6zM8 2v12l5-6z', 'e'),
      Transport('M2 2v12l4-6zM7 2v12l4-6zM12 2h2v12h-2z', 'f'),
    ]} />
    <Dark className="ml-[6px] w-[115px] pl-[7px] pr-[4px] justify-between">No Sync<UpDown /></Dark>
    <Cells className="ml-[17px]" items={[<S size={14} key="a"><circle cx="8" cy="8" r="5.500" fill="#e8501c" stroke="#333" /></S>]} />
    <div className="ml-[4px] flex h-[21px] w-[171px] rounded-[4px] border border-[#333] overflow-hidden shrink-0">
      <div className="w-[130px] border-r border-[#333] bg-gradient-to-b from-[#909090] to-[#b0b0b0] pl-[3px] flex items-center">
        <S size={15}><path d="M4 1h2v9H4z" fill="#d8c860" stroke="#222" strokeWidth=".5" /><circle cx="5" cy="12" r="2.500" fill="none" stroke="#d8c860" strokeWidth="1.300" /><path d="M7 11l6-6 1 1-5 6" fill="#ddd" stroke="#222" strokeWidth=".6" /></S>
      </div>
      <div className="w-[20px] border-r border-[#333] bg-gradient-to-b from-[#8e8e8e] to-[#7a7a7a] flex items-center justify-center">{KeyIcon('#eee')}</div>
      <div className="flex-1 bg-gradient-to-b from-[#8e8e8e] to-[#7a7a7a] flex items-center justify-center">{KeyIcon('#eee', true)}</div>
    </div>
    <Hatch className="right-0 bottom-0" />
  </div>
);

const OutRow: React.FC<{ pl: string; bg?: string; children: React.ReactNode }> = ({ pl, bg = 'bg-[#707070]', children }) => (
  <div className={`h-[20px] flex items-center ${pl} ${bg} whitespace-nowrap`}>{children}</div>
);
const Toggle: React.FC<{ minus?: boolean }> = ({ minus }) => (
  <svg width="11" height="11" viewBox="0 0 11 11" className="shrink-0"><circle cx="5.500" cy="5.500" r="4.500" fill="#e0e0e0" stroke="#1a1a1a" /><path d={minus ? 'M3 5.500h5' : 'M3 5.500h5M5.500 3v5'} stroke="#111" /></svg>
);
const Tag = () => <div className="w-[2px] h-[12px] bg-[#4a4a4a] shrink-0" />;
const Restrict = () => (
  <div className="absolute right-[16px] flex">
    <div className="w-[20px] flex justify-center">{Eye}</div>
    <div className="w-[20px] flex justify-center">{Arrow}</div>
    <div className="w-[20px] flex justify-center">{RenderCam}</div>
  </div>
);

const Outliner = () => (
  <>
    <div className="relative h-[25px] shrink-0 flex items-center pt-[3px] bg-gradient-to-b from-[#727272] to-[#6a6a6a] text-[10.750px]">
      <Dark className="ml-[9px] w-[30px] justify-center gap-[2px]">
        <S size={14}><rect x="1" y="1" width="7" height="2.500" fill="#f0a040" /><path d="M2 3.500V14M2 8h4M2 13h4" stroke="#f0f0f0" /><rect x="7" y="7" width="7" height="2" fill="#f0f0f0" /><rect x="7" y="12" width="7" height="2" fill="#f0f0f0" /></S>
        <UpDown />
      </Dark>
      <div className="w-[13px] shrink-0" />
      <MenuText w="w-[44px]">View</MenuText>
      <MenuText w="w-[47px]">Search</MenuText>
      <div className="h-[21px] flex-1 rounded-l-[5px] border border-r-0 border-[#2b2b2b] bg-gradient-to-b from-[#333] to-[#505050] text-white flex items-center pl-[8px]">All Scenes</div>
      <Hatch className="right-0 top-0" flip />
    </div>
    <div className="relative h-[126px] shrink-0 bg-[#6e6e6e] text-[10.750px] text-[#0f0f0f] overflow-hidden">
      <div className="h-[3px]" />
      <OutRow pl="pl-[2px]" bg="bg-[#84919c]">
        <Toggle minus />
        <div className="w-[9px] h-px bg-[#333] shrink-0" />
        <div className="w-[20px] h-[20px] -ml-[2px] rounded-full bg-[#9aa6b0] flex items-center justify-center shrink-0">{SceneIcon}</div>
        <span className="ml-[1px]">Scene</span>
      </OutRow>
      <OutRow pl="pl-[28px]" bg="bg-[#727272]">
        <Toggle />
        <div className="w-[2px]" />
        {Layers}
        <span className="ml-[4px] mr-[9px]">RenderLayers</span>
        <Tag />
      </OutRow>
      <OutRow pl="pl-[40px]" bg="bg-[#6d6d6d]">
        <div className="rounded-full bg-[#8590a0] w-[17px] h-[17px] flex items-center justify-center -ml-[1px]">{Globe}</div>
        <span className="ml-[3px]">World</span>
      </OutRow>
      <OutRow pl="pl-[22px]" bg="bg-[#727272]">
        <Toggle />
        <div className="w-[10px] h-px bg-[#333] shrink-0" />
        {CamOrange}
        <span className="ml-[3px] mr-[9px]">Camera</span>
        <Tag />
        <div className="ml-[8px] w-[19px] h-[19px] rounded-full bg-[#8f8f8f] flex items-center justify-center opacity-90">
          <S size={14}><circle cx="4" cy="3.500" r="2.500" fill="#bbb" stroke="#555" strokeWidth=".6" /><circle cx="10" cy="3.500" r="2.500" fill="#bbb" stroke="#555" strokeWidth=".6" /><rect x="2" y="6.500" width="9" height="6" fill="#bbb" stroke="#555" strokeWidth=".6" /><path d="M11 9l4-2v5l-4-2z" fill="#bbb" stroke="#555" strokeWidth=".6" /></S>
        </div>
        <Restrict />
      </OutRow>
      <OutRow pl="pl-[22px]" bg="bg-[#6d6d6d]">
        <Toggle />
        <div className="w-[7px] h-px bg-[#333] shrink-0" />
        <div className="w-[18px] h-[18px] rounded-full bg-[#a8825a] flex items-center justify-center shrink-0">{ConeTri('#f09830')}</div>
        <span className="ml-[1px] mr-[9px] text-white">Cone</span>
        <Tag />
        <div className="ml-[8px] w-[19px] h-[19px] rounded-full bg-[#8f8f8f] flex items-center justify-center">{ConeTri('#555')}</div>
        <Restrict />
      </OutRow>
      <OutRow pl="pl-[22px]" bg="bg-[#727272]">
        <Toggle />
        <div className="w-[9px] h-px bg-[#333] shrink-0" />
        {ConeTri('#f09830')}
        <span className="ml-[3px] mr-[9px]">Cylinder</span>
        <Tag />
        <div className="ml-[10px]">{ConeTri('#4a4a4a')}</div>
        <Restrict />
      </OutRow>
      <div className="absolute left-[28px] top-[24px] w-px h-[102px] bg-[#333]" />
      <div className="absolute top-0 bottom-0 left-[145px] w-px bg-[#606060]" />
      <div className="absolute top-0 bottom-0 left-[166px] w-px bg-[#606060]" />
      <div className="absolute top-0 bottom-0 left-[186px] w-px bg-[#606060]" />
      {/* scrollbars lie on the list */}
      <div className="absolute left-[205px] top-[7px] w-[13px] h-[115px] rounded-full bg-[#5a5a5a] border border-[#555]">
        <div className="h-[102px] rounded-full bg-gradient-to-r from-[#8c8c8c] to-[#7a7a7a] border border-[#5e5e5e]" />
      </div>
    </div>
    <div className="h-[19px] shrink-0 bg-[#6b6b6b] pl-[4px] pr-[22px] pt-[1px] relative">
      <div className="h-[13px] rounded-full bg-[#5a5a5a] border border-[#555]">
        <div className="h-full w-[132px] rounded-full bg-gradient-to-b from-[#8c8c8c] to-[#7a7a7a] border border-[#5e5e5e]" />
      </div>
      <Hatch className="left-0 bottom-0" />
    </div>
  </>
);

const PROP_TABS: React.ReactNode[] = [
  <S key="r"><rect x="2" y="5" width="12" height="9" fill="#8a8a8a" stroke="#222" strokeWidth=".7" /><rect x="4" y="3" width="4" height="2" fill="#888" /><circle cx="8" cy="9.500" r="3" fill="#2a2a2a" /><circle cx="8" cy="9.500" r="1" fill="#c33" /></S>,
  <span key="l">{Layers}</span>,
  <span key="s">{SceneIcon}</span>,
  <span key="w">{Globe}</span>,
  <S key="o"><path d="M8 1 14 3.500v9L8 15l-6-2.500v-9z" fill="#c89a60" stroke="#222" strokeWidth=".6" /><path d="M8 6.500 14 3.500v9L8 15z" fill="#a07840" /><path d="M2 3.500 8 1l6 2.500-6 3z" fill="#dcc09a" /></S>,
  <S key="c"><path d="M7 10 5 12a2.500 2.500 0 0 1-3.500-3.500L5 5a2.500 2.500 0 0 1 3.500 0M9 6l2-2a2.500 2.500 0 0 1 3.500 3.500L11 11a2.500 2.500 0 0 1-3.500 0" fill="none" stroke="#c8c8c8" strokeWidth="1.400" /></S>,
  <S key="m"><path d="M1.500 14.500 3 15l6.500-7.500q3 1 4.500-1.500.7-1.500.3-2.500L12 6 10.500 5l.5-3q-2-.5-3.500 1Q6 5 7 7z" fill="#f0f4fa" stroke="#18283c" strokeWidth=".7" /></S>,
  <span key="d">{ConeTri('#2a2a2a')}</span>,
  <S key="mt"><circle cx="9" cy="8" r="7" fill="#8a7060" /><path d="M2 8a7 7 0 0 1 7-7v7z" fill="#e8e8e8" /></S>,
];

const Properties = () => (
  <div className="relative flex-1 bg-[#727272] text-[10.750px] text-[#111] overflow-hidden">
    <div className="h-[2px] bg-[#141414]" />
    <div className="relative h-[25px] flex items-center bg-gradient-to-b from-[#6f6f6f] to-[#6a6a6a] overflow-hidden">
      <Dark className="ml-[9px] w-[30px] justify-center gap-[2px]">
        <S size={14}><rect x="1" y="2" width="14" height="5" rx="2" fill="#e8e8e8" /><rect x="1" y="9" width="14" height="5" rx="2" fill="#e8e8e8" /><rect x="3" y="3.500" width="6" height="2" fill="#333" /><rect x="6" y="10.500" width="6" height="2" fill="#333" /></S>
        <UpDown />
      </Dark>
      <div className="flex ml-[7px] h-[20px] rounded-l-[4px] border border-[#2b2b2b] overflow-hidden shrink-0">
        {PROP_TABS.map((t, i) => (
          <div key={i} className={`w-[20px] flex items-center justify-center border-r border-[#333] shrink-0 bg-gradient-to-b ${i === 6 ? 'from-[#5d86c6] to-[#6f97d6]' : 'from-[#3d3d3d] to-[#555]'}`}>{t}</div>
        ))}
      </div>
      <Hatch className="right-0 top-0" flip />
    </div>
    <div className="flex items-center h-[20px] mt-[9px] pl-[9px]">
      <S><path d="M9.500 1l5 5-2 .5-3 3 .5 2.500-1 1-2.500-2.500-4.500 4.500-.5-.5 4.500-4.500L3.500 8l1-1 2.500.5 3-3z" fill="#eee" stroke="#222" strokeWidth=".7" /></S>
      <div className="ml-[7px]">{SceneIcon}</div>
      <svg width="4" height="7" viewBox="0 0 4 7" className="ml-[5px]"><path d="M0 0v7l4-3.500z" fill="#444" /></svg>
      <div className="ml-[13px]">{Cube}</div>
      <span className="ml-[5px]">Cone</span>
    </div>
    <div className="ml-[8px] mt-[16px] w-[206px] h-[20px] rounded-t-[4px] border border-[#2b2b2b] bg-gradient-to-b from-[#3f3f3f] to-[#5c5c5c] text-[#c8c8c8] flex items-center justify-between pl-[7px] pr-[3px]">Add Modifier<UpDown c="#d8d8d8" /></div>
  </div>
);

const AddModifierMenu = () => (
  <div className="absolute left-[1047px] top-[310px] w-[623px] h-[381px] rounded-[3px] bg-[#1c1c1c] shadow-[0_2px_16px_rgba(0,0,0,0.7)] pt-[5px] flex text-[10.800px] text-[#e4e4e4]">
    {COLS.map((col, ci) => (
      <div key={col.title} className={`${col.w} shrink-0 ${ci === 0 ? 'pl-[2px]' : ''}`}>
        <div className={`h-[21px] flex items-center text-[#8c8c8c] ${ci === 0 ? 'pl-[5px]' : 'pl-[7px]'}`}>{col.title}</div>
        {col.items.map(([name, at]) => {
          const on = name === 'Subdivision Surface';
          return (
            <div key={name} className="h-[22px] flex items-center">
              <div className={`h-[18px] w-full flex items-center pl-[6px] ${ci === 0 ? 'gap-[6px]' : 'gap-[7px]'} whitespace-nowrap ${on ? 'bg-gradient-to-b from-[#7298da] to-[#4f78bd] text-[#0c0c0c]' : ''}`}>
                <S>{MOD[name]}</S>
                <Accel label={name} at={at} />
              </div>
            </div>
          );
        })}
      </div>
    ))}
  </div>
);

const Tooltip = () => (
  <div className="absolute left-[1262px] top-[646px] w-[334px] h-[54px] rounded-[5px] bg-[#191919]/90 border border-[#2a2a2a] shadow-[0_2px_10px_rgba(0,0,0,0.6)] pl-[11px] pt-[12px] text-[10.800px] text-[#ececec]">
    <div className="h-[21px] whitespace-nowrap leading-[14px]">Add a modifier to the active object: <span className="text-[#7ea6dc] ml-[1px]">Subdivision Surface</span></div>
    <div className="whitespace-nowrap text-[#8a8a8a] text-[9.800px] leading-[14px] [font-family:'DejaVu_Sans_Mono',monospace]">Python: bpy.ops.object.modifier_add(type='SUBSURF')</div>
  </div>
);

const App: React.FC = () => (
  <div className={`w-[1792px] h-[1135px] bg-white pl-[56px] pt-[31px] overflow-hidden ${FONT}`}>
    <div className="relative w-[1680px] h-[1024px] flex flex-col rounded-t-[5px] bg-[#727272] shadow-[0_22px_55px_rgba(0,0,0,0.5)]">
      <div className="relative h-[23px] shrink-0 rounded-t-[5px] bg-gradient-to-b from-[#ebe9eb] to-[#d6d4d6] flex items-center justify-center text-[13px] text-[#444] [font-family:'Open_Sans',sans-serif]">
        <div className="absolute left-[9px] top-[6px] flex gap-[8px]">
          <div className="w-[12px] h-[12px] rounded-full bg-[#fc5b57] border border-[#e2463f] flex items-center justify-center"><div className="w-[4px] h-[4px] rounded-full bg-[#6e0b07]" /></div>
          <div className="w-[12px] h-[12px] rounded-full bg-[#fdbc2e] border border-[#e1a116]" />
          <div className="w-[12px] h-[12px] rounded-full bg-[#34c84a] border border-[#2aac3a]" />
        </div>
        Blender
      </div>
      <MenuBar />
      <div className="flex-1 flex min-h-0">
        <div className="w-[1458px] shrink-0 flex flex-col border-r border-[#2c2c2c]">
          <div className="flex h-[856px] shrink-0">
            <ToolShelf />
            <div className="relative flex-1 bg-[#393939] overflow-hidden text-[10.750px] text-[#f0f0f0]">
              <Viewport3D />
              <div className="absolute left-[19px] top-[11px]">User Persp</div>
              <div className="absolute left-[69px] top-[834px]">(1) Cone</div>
              <div className="absolute left-[55px] top-[817px] text-[10px] leading-none text-[#30d030]">y</div>
              <div className="absolute left-[26px] top-[795px] text-[10px] leading-none text-[#4a62e8]">z</div>
              <div className="absolute right-[4px] top-[25px] w-[14px] h-[14px] rounded-[2px] bg-[#444] flex items-center justify-center text-[#808080] text-[13px] leading-none">+</div>
            </div>
          </div>
          <ViewHeader />
          <Timeline />
          <ScaleBar />
          <Footer />
        </div>
        <div className="flex-1 flex flex-col min-w-0">
          <Outliner />
          <Properties />
        </div>
      </div>
      <AddModifierMenu />
      <Tooltip />
    </div>
  </div>
);

export default App;
